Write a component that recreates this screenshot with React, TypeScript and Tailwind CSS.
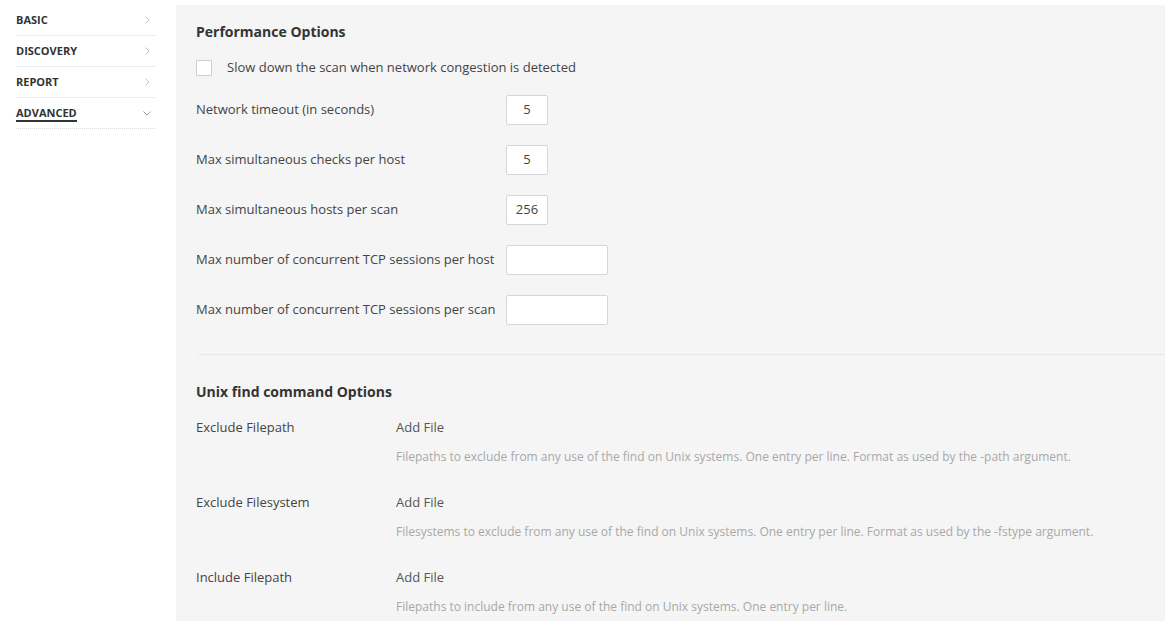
import React from "react";

const font = { fontFamily: '"Open Sans", "Noto Sans", sans-serif' };

function Chevron({ down }: { down?: boolean }) {
  return down ? (
    <svg width="8" height="5" viewBox="0 0 8 5" className="mr-[4px]">
      <path d="M0.5 0.5 L4 4 L7.5 0.5" fill="none" stroke="#9a9a9a" strokeWidth="1" />
    </svg>
  ) : (
    <svg width="5" height="8" viewBox="0 0 5 8" className="mr-[5px]">
      <path d="M0.5 0.5 L4 4 L0.5 7.5" fill="none" stroke="#c4c4c4" strokeWidth="1" />
    </svg>
  );
}

const navItems = ["BASIC", "DISCOVERY", "REPORT", "ADVANCED"];

function NumberRow({ label, value, wide }: { label: string; value?: string; wide?: boolean }) {
  return (
    <div className="flex items-center h-[30px] mt-[20px] first:mt-0">
      <div className="w-[310px] text-[13px] text-[#444]">{label}</div>
      <div
        className={`${wide ? "w-[102px]" : "w-[42px]"} h-[30px] bg-white border border-[#d6d6d6] rounded-[2px] flex items-center justify-center text-[13px] text-[#444]`}
      >
        {value}
      </div>
    </div>
  );
}

function FileRow({ label, desc }: { label: string; desc: string }) {
  return (
    <div className="flex h-[75px]">
      <div className="w-[200px] text-[13px] leading-[20px] text-[#444]">{label}</div>
      <div className="flex flex-col">
        <div className="text-[13px] leading-[20px] text-[#555]">Add File</div>
        <div className="text-[12px] leading-[20px] text-[#a8a8a8] mt-[10px]">{desc}</div>
      </div>
    </div>
  );
}

export default function App() {
  return (
    <div className="flex w-[1165px] h-[622px] bg-white overflow-hidden" style={font}>
      <div className="w-[176px] shrink-0 pl-[16px] pr-[21px] pt-[5px]">
        {navItems.map((item) => (
          <div
            key={item}
            className="h-[31px] flex items-center justify-between border-b border-dotted border-[#dcdcdc]"
          >
            <span
              className={`text-[11px] font-bold text-[#333] ${item === "ADVANCED" ? "border-b-2 border-[#333] leading-[14px] mt-[2px]" : ""}`}
            >
              {item}
            </span>
            <Chevron down={item === "ADVANCED"} />
          </div>
        ))}
      </div>
      <div className="flex-1 mt-[5px] h-[616px] bg-[#f5f5f5] pt-[17px]">
        <div className="pl-[20px]">
          <div className="text-[14px] leading-[20px] font-bold text-[#333]">Performance Options</div>
          <div className="flex items-center mt-[18px] h-[16px]">
            <div className="w-[16px] h-[16px] bg-white border border-[#cfcfcf]" />
            <span className="ml-[15px] text-[13px] text-[#444]">
              Slow down the scan when network congestion is detected
            </span>
          </div>
          <div className="mt-[19px] flex flex-col">
            <NumberRow label="Network timeout (in seconds)" value="5" />
            <NumberRow label="Max simultaneous checks per host" value="5" />
            <NumberRow label="Max simultaneous hosts per scan" value="256" />
            <NumberRow label="Max number of concurrent TCP sessions per host" wide />
            <NumberRow label="Max number of concurrent TCP sessions per scan" wide />
          </div>
        </div>
        <div className="ml-[22px] mt-[29px] border-t border-dotted border-[#dadada]" />
        <div className="pl-[20px] pt-[27px]">
          <div className="text-[14px] leading-[20px] font-bold text-[#333]">Unix find command Options</div>
          <div className="mt-[15px]">
            <FileRow
              label="Exclude Filepath"
              desc="Filepaths to exclude from any use of the find on Unix systems. One entry per line. Format as used by the -path argument."
            />
            <FileRow
              label="Exclude Filesystem"
              desc="Filesystems to exclude from any use of the find on Unix systems. One entry per line. Format as used by the -fstype argument."
            />
            <FileRow
              label="Include Filepath"
              desc="Filepaths to include from any use of the find on Unix systems. One entry per line."
            />
          </div>
        </div>
      </div>
    </div>
  );
}
